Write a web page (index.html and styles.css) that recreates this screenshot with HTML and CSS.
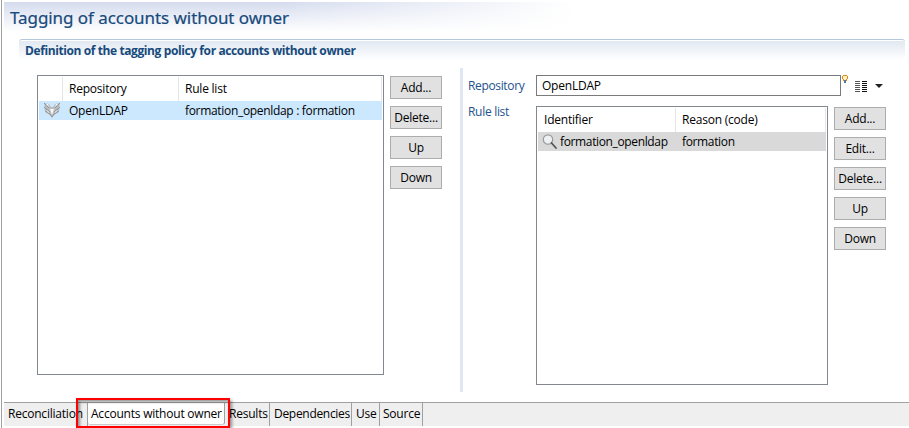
FILE: index.html
```html
<!DOCTYPE html>
<html lang="en">
<head>
<meta charset="utf-8">
<title>Tagging of accounts without owner</title>
<link rel="stylesheet" href="styles.css">
</head>
<body>
<div class="editor">
  <header class="form-head"><h1>Tagging of accounts without owner</h1></header>
  <section class="section">
    <h2>Definition of the tagging policy for accounts without owner</h2>
    <div class="body">
      <div class="table left">
        <div class="row head"><span></span><span>Repository</span><span>Rule list</span></div>
        <div class="row selected">
          <span><svg class="fox" width="18" height="17" viewBox="0 0 18 17"><path d="M1 1l5 1 2 3h2l2-3 5-1-1 5 1 1-2 2 1 1-3 2-2 1-2 3-2-3-2-1-3-2 1-1-2-2 1-1z" fill="#b9bec2"/><path d="M1 1l5 5M1 5l6 5M2 9l5 3M17 1l-5 5M17 5l-6 5M16 9l-5 3M7 12l2 3 2-3" fill="none" stroke="#8f9498"/><path d="M7 7l2 6 2-6zM3 2l2 0 1 3zM15 2l-2 0-1 3zM4 8l2 2-1 1zM14 8l-2 2 1 1z" fill="#f7f8f9"/></svg></span>
          <span>OpenLDAP</span><span class="wide">formation_openldap : formation</span>
        </div>
      </div>
      <div class="buttons"><button>Add...</button><button>Delete...</button><button>Up</button><button>Down</button></div>
      <div class="divider"></div>
      <div class="details">
        <div class="field">
          <label>Repository</label><div class="input">OpenLDAP</div>
          <svg class="bulb" width="6" height="9" viewBox="0 0 6 9" shape-rendering="crispEdges"><path d="M1 0h4v1h1v3H5v2H1V4H0V1h1z" fill="#e58a13"/><path d="M1 1h4v3H4v1H2V4H1z" fill="#fff0c8"/><path d="M2 5h2v3H2z" fill="#55799a"/></svg>
          <svg class="lines" width="13" height="12" viewBox="0 0 13 12" shape-rendering="crispEdges"><path d="M0 .5h5M0 2.500h5M0 4.500h5M0 6.500h5M0 8.500h5M0 10.500h5" stroke="#555"/><path d="M7 .5h5M7 2.500h5M7 4.500h5M7 6.500h5M7 8.500h5M7 10.500h5" stroke="#111"/></svg>
          <svg class="arrow" width="8" height="4" viewBox="0 0 8 4"><path d="M0 0h8L4 4z" fill="#222"/></svg>
        </div>
        <div class="rules">
          <label>Rule list</label>
          <div class="table right">
            <div class="row head"><span>Identifier</span><span>Reason (code)</span></div>
            <div class="row selected"><span><svg class="lens" width="16" height="16" viewBox="0 0 16 16"><circle cx="6" cy="5.500" r="4.700" fill="#edf1f3" stroke="#999" stroke-width="1.200"/><path d="M9.500 9l4.500 5" stroke="#555" stroke-width="1.800" stroke-linecap="round"/></svg><b class="id">formation_openldap</b></span><span class="reason">formation</span></div>
          </div>
          <div class="buttons"><button>Add...</button><button>Edit...</button><button>Delete...</button><button>Up</button><button>Down</button></div>
        </div>
      </div>
    </div>
  </section>
  <nav class="tabs">
    <span class="t1">Reconciliation</span><span class="t2 active">Accounts without owner</span><span class="t3">Results</span><span class="t4">Dependencies</span><span class="t5">Use</span><span class="t6">Source</span>
    <i class="highlight"></i>
  </nav>
</div>
</body>
</html>
```
FILE: styles.css
```css
* { box-sizing: border-box; }
body { margin: 0; width: 909px; height: 428px; overflow: hidden; background: #fff; color: #000; font: 12px/16px "Open Sans", sans-serif; letter-spacing: -.22px; }
.editor { margin-left: 1px; height: 428px; border-left: 1px solid #a0a0a0; padding: 2px 0 0 2px; display: flex; flex-direction: column; }
.form-head { height: 37px; flex: none; background: linear-gradient(to bottom, transparent, #fff 30px), linear-gradient(to right, #d5dcee 0, #d5dcee 280px, #fff 570px); }
h1 { margin: 0; padding: 5px 0 0 6px; font: 17px/22px "Noto Sans", sans-serif; color: #174a7c; letter-spacing: -.06px; white-space: nowrap; -webkit-text-stroke: .2px #174a7c; }
.section { margin-left: 15px; width: 886px; height: 363px; flex: none; }
h2 { margin: 0; height: 21px; padding: 2px 0 0 6px; border-top: 1px solid #b4c7dc; border-radius: 3px 3px 0 0; box-shadow: inset 0 1px #fff; background: linear-gradient(#dfe7f1, #fff); color: #174a7c; font: bold 12px/17px "Open Sans", sans-serif; letter-spacing: -.4px; }
.body { display: flex; padding: 8px 0 0 18px; white-space: nowrap; }
.table { border: 1px solid #828790; padding: 1px; }
.table.left { width: 347px; height: 300px; margin-top: 7px; }
.row { display: grid; height: 19px; align-items: center; }
.left .row { grid-template-columns: 24px 116px 203px; }
.right .row { grid-template-columns: 138px 150px; }
.row.head { height: 24px; }
.head span { border-right: 1px solid #e5e5e5; height: 24px; line-height: 24px; }
.row span { padding-left: 6px; }
.left .row span:first-child { padding-left: 4px; }
.left .selected { background: #cce8ff; }
.right .selected { background: #d9d9d9; }
.wide { letter-spacing: -.32px; }
.id { letter-spacing: -.36px; }
.reason { letter-spacing: -.35px; }
.row svg, .field svg { display: block; }
.buttons { display: flex; flex-direction: column; gap: 7px; margin: 8px 0 0 6px; }
button { width: 52px; height: 23px; padding: 0; border: 1px solid #adadad; background: #e1e1e1; color: #000; font: inherit; letter-spacing: inherit; line-height: 21px; }
.divider { width: 3px; height: 324px; margin: 0 5px 0 18px; background: #dfe8f2; }
label { width: 68px; color: #24528c; flex: none; }
.field { display: flex; margin-top: 7px; height: 21px; }
.field label { line-height: 21px; letter-spacing: -.35px; }
.input { width: 305px; border: 1px solid #7a7a7a; padding-left: 5px; line-height: 19px; }
.bulb { margin-left: 1px; }
.lines { margin: 6px 0 0 7px; }
.arrow { margin: 9px 0 0 7px; }
.rules { display: flex; margin-top: 10px; }
.rules label { line-height: 12px; letter-spacing: -.3px; }
.table.right { width: 292px; height: 279px; }
.right .selected span:first-child { display: flex; padding-left: 4px; }
.right b { font-weight: normal; }
.lens { margin-right: 2px; }
.rules .buttons { margin-top: 1px; }
.tabs { position: relative; flex: none; height: 24px; display: flex; border-top: 1px solid #a0a0a0; background: #efefef; white-space: nowrap; line-height: 22px; }
.tabs span { border-right: 1px solid #a0a0a0; padding-left: 4px; }
.t1 { width: 84px; } .t2 { width: 137px; } .t3 { width: 45px; } .t4 { width: 82px; } .t5 { width: 28px; } .t6 { width: 43px; }
.tabs .t2, .tabs .t6 { padding-left: 3px; }
.t1 { border-right-color: #777; }
.t4 { letter-spacing: -.3px; }
.active { background: #fff; height: 22px; border-bottom: 1px solid #ccc; border-radius: 0 0 3px 3px; letter-spacing: -.22px; }
.highlight { position: absolute; left: 72px; top: -5px; width: 154px; height: 30px; border: 2px solid #f00; box-shadow: 2px 2px 3px #0006, inset 2px 2px 3px #0006; }
```
